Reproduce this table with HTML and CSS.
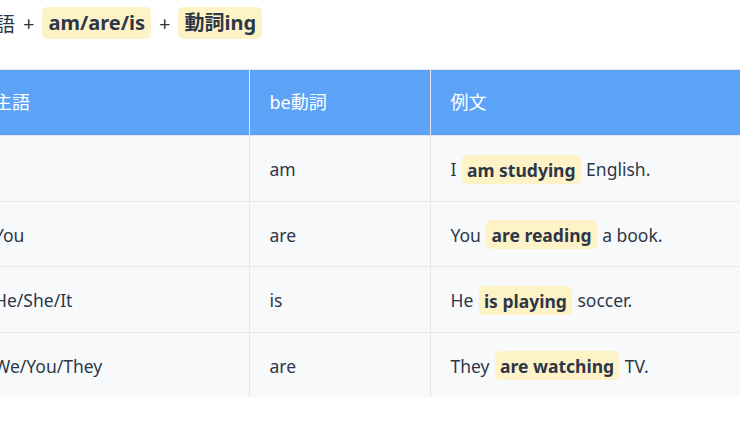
FILE: index.html
```html
<!DOCTYPE html>
<html lang="ja">
<head>
<meta charset="utf-8">
<link rel="stylesheet" href="styles.css">
</head>
<body>
<div class="page">
  <div class="formula">
    <span class="term">主語</span>
    <span class="plus">+</span>
    <span class="chip chip-lg">am/are/is</span>
    <span class="plus">+</span>
    <span class="chip chip-lg">動詞ing</span>
  </div>
  <table class="grid">
    <colgroup>
      <col class="c1">
      <col class="c2">
      <col>
    </colgroup>
    <thead>
      <tr><th>主語</th><th>be動詞</th><th>例文</th></tr>
    </thead>
    <tbody>
      <tr><td>I</td><td>am</td><td>I <span class="chip">am studying</span> English.</td></tr>
      <tr><td>You</td><td>are</td><td>You <span class="chip">are reading</span> a book.</td></tr>
      <tr><td>He/She/It</td><td>is</td><td>He <span class="chip">is playing</span> soccer.</td></tr>
      <tr><td>We/You/They</td><td>are</td><td>They <span class="chip">are watching</span> TV.</td></tr>
    </tbody>
  </table>
</div>
</body>
</html>
```
FILE: styles.css
```css
html, body {
  margin: 0;
  padding: 0;
  background: #ffffff;
  overflow: hidden;
}
body {
  font-family: "Noto Sans", "Noto Sans CJK JP", sans-serif;
  color: #2d3748;
}
.page {
  margin-left: -26px;
  margin-right: -20px;
  padding-top: 7px;
}
.formula {
  display: flex;
  align-items: center;
  gap: 8px;
  height: 32px;
  font-size: 20px;
  margin-bottom: 30px;
  padding-left: 1px;
}
.chip {
  background: #fef3c7;
  border-radius: 5px;
  padding: 2.5px 5px;
  font-weight: 700;
  margin: 0 1px;
}
.chip-lg {
  display: inline-block;
  line-height: 24px;
  padding: 4px 6px;
  margin: 0;
}
.grid {
  width: 100%;
  border-collapse: collapse;
  table-layout: fixed;
  border-top: 1px solid #e5e7eb;
}
.c1 { width: 275px; }
.c2 { width: 181px; }
.grid th {
  background: #5ca3f8;
  color: #ffffff;
  font-weight: 400;
  font-size: 18px;
  line-height: 25px;
  text-align: left;
  padding: 20px 20px;
  border-left: 1px solid #e5e7eb;
}
.grid th:first-child { border-left: none; }
.grid td {
  background: #f8f9fb;
  font-size: 17.5px;
  line-height: 24.5px;
  padding: 21px 20px 19px;
  border-left: 1px solid #e5e7eb;
  border-top: 1px solid #e5e7eb;
  white-space: nowrap;
}
.grid td:first-child { border-left: none; }
```
